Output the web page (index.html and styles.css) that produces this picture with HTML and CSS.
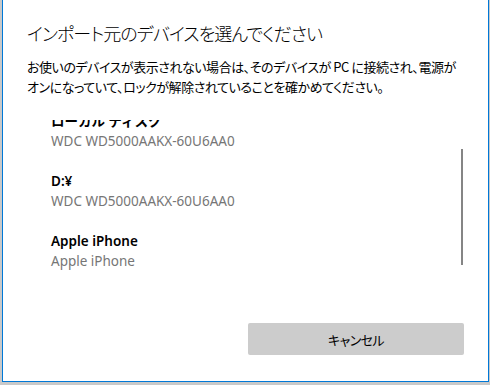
FILE: index.html
```html
<!DOCTYPE html>
<html lang="ja">
<head>
    <meta charset="UTF-8">
    <title>インポート元のデバイスを選んでください</title>
    <link rel="stylesheet" href="styles.css">
</head>
<body>
    <div class="dialog">
        <h1 class="title">インポート元のデバイスを選んでください</h1>
        <p class="message">お使いのデバイスが表示されない場合は、そのデバイスが PC に接続され、電源がオンになっていて、ロックが解除されていることを確かめてください。</p>

        <div class="device-pane">
            <ul class="device-list">
                <li class="device">
                    <div class="device-name">ローカル ディスク</div>
                    <div class="device-model">WDC WD5000AAKX-60U6AA0</div>
                </li>
                <li class="device">
                    <div class="device-name">D:¥</div>
                    <div class="device-model">WDC WD5000AAKX-60U6AA0</div>
                </li>
                <li class="device">
                    <div class="device-name">Apple iPhone</div>
                    <div class="device-model">Apple iPhone</div>
                </li>
            </ul>
            <div class="scrollbar"></div>
        </div>

        <div class="actions">
            <button class="button">キャンセル</button>
        </div>
    </div>
</body>
</html>
```

FILE: styles.css
```css
body {
    margin: 0;
    background-color: #c9c9c9;
    font-family: "Noto Sans", "Noto Sans CJK JP", sans-serif;
    color: #000;
    overflow: hidden;
}
.dialog {
    box-sizing: border-box;
    width: 487px;
    height: 382px;
    margin-left: 2px;
    border: 1px solid #0078d7;
    border-top: none;
    background: white;
    padding: 0 24px;
    display: flex;
    flex-direction: column;
}
.title {
    margin: 19px 0 0;
    font-family: "Noto Sans CJK JP", sans-serif;
    font-size: 18px;
    font-weight: 300;
    line-height: 28px;
    font-feature-settings: "palt";
    letter-spacing: -0.9px;
}
.message {
    margin: 10px 0 0;
    font-family: "Noto Sans CJK JP", sans-serif;
    font-size: 13px;
    line-height: 20px;
    font-feature-settings: "palt";
    letter-spacing: -0.45px;
}
.device-pane {
    position: relative;
    height: 155px;
    margin-top: 23px;
    overflow: hidden;
}
.device-list {
    list-style: none;
    margin: -9px 0 0;
    padding: 0 0 0 24px;
}
.device {
    height: 60px;
    font-size: 13.5px;
    line-height: 20px;
}
.device-name {
    font-weight: 600;
}
.device-model {
    color: #767676;
}
.scrollbar {
    position: absolute;
    right: 1px;
    top: 29px;
    width: 2px;
    height: 116px;
    background: #858585;
}
.actions {
    display: flex;
    justify-content: flex-end;
    margin-top: auto;
    padding-bottom: 26px;
}
.button {
    width: 216px;
    height: 32px;
    border: none;
    border-radius: 2px;
    background-color: #cccccc;
    font-family: "Noto Sans CJK JP", sans-serif;
    font-size: 13px;
    font-feature-settings: "palt";
    letter-spacing: -0.6px;
    color: #000;
}
```
